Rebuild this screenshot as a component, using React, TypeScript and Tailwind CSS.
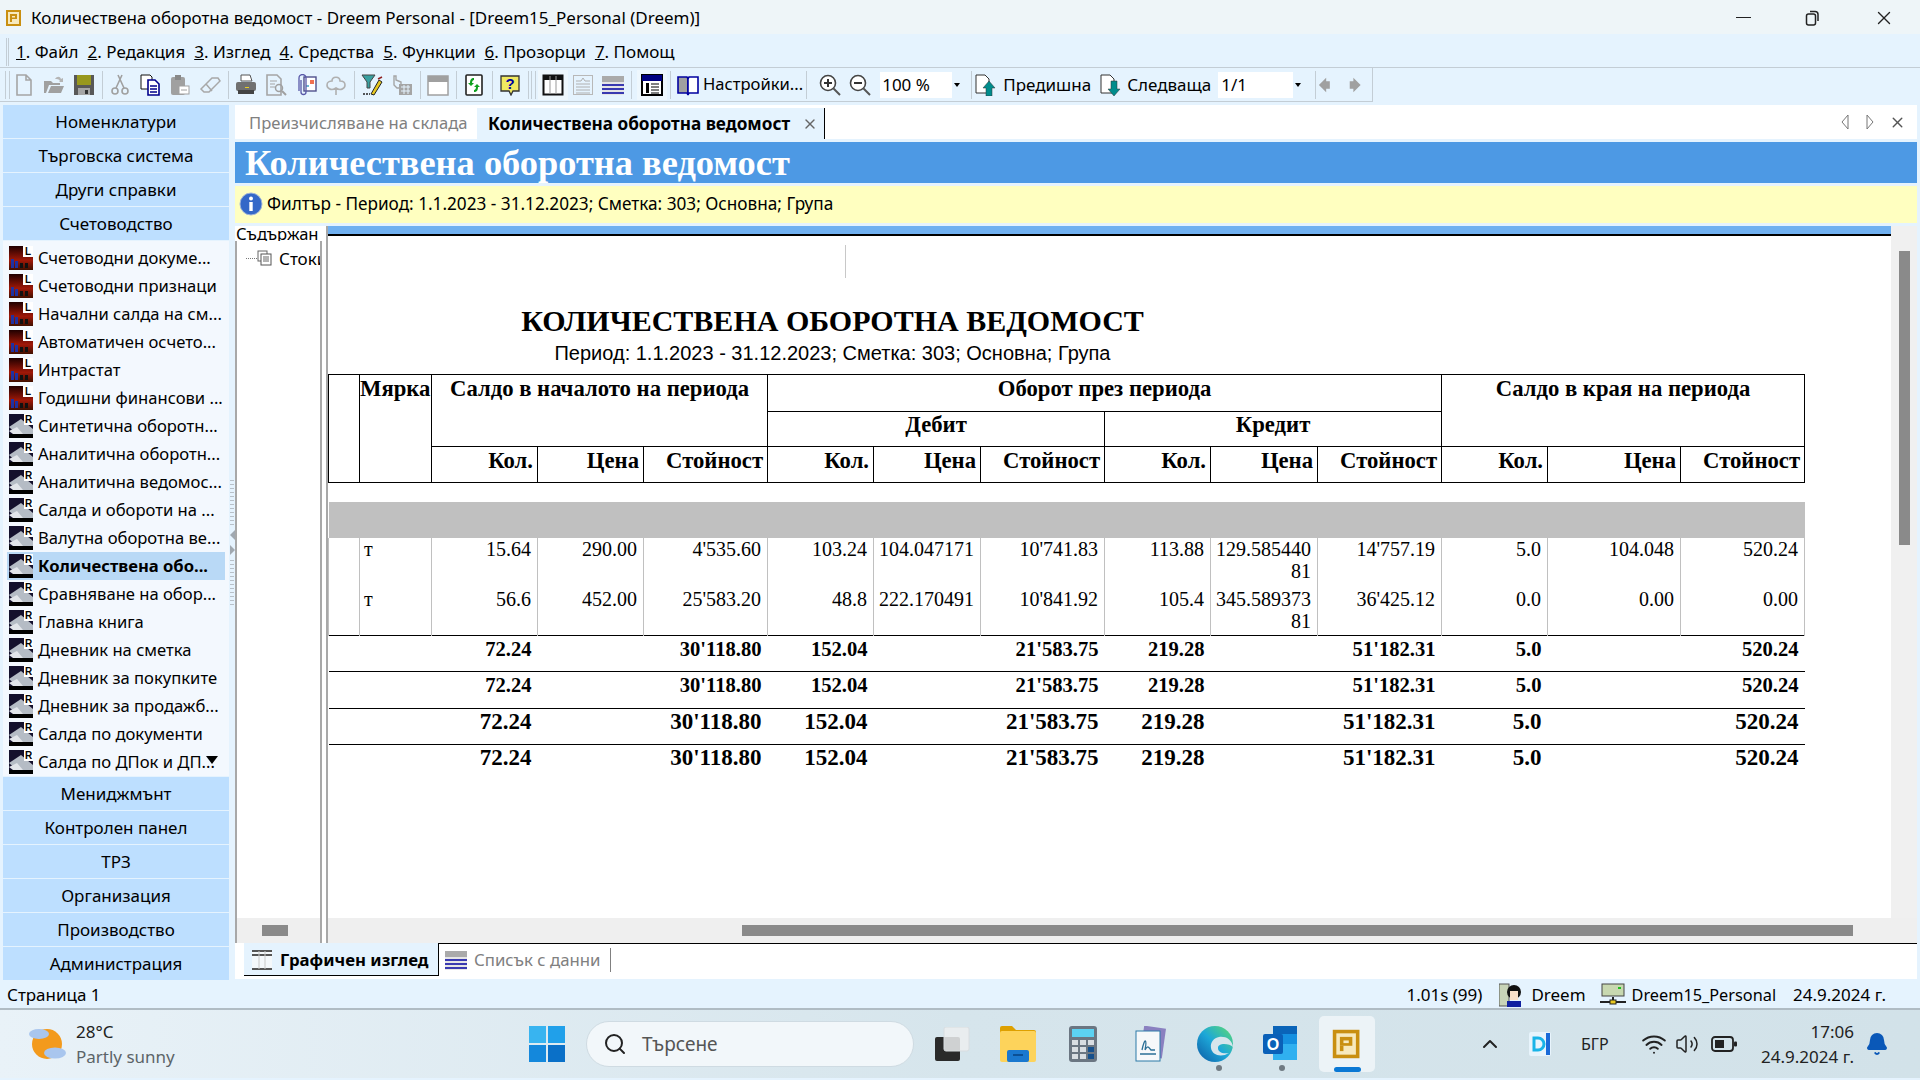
import type { ReactNode } from 'react'
import { X, Search, ChevronUp, Wifi, Volume2, Bell } from 'lucide-react'

const Svg = ({ children, size = 22 }: { children: ReactNode; size?: number }) => (
    <svg width={size} height={size} viewBox="0 0 22 22">{children}</svg>
)

const icons: Record<string, ReactNode> = {
    file: <path d="M4 1h9l5 5v15H4zM13 1v5h5" fill="none" stroke="#a5a5a5" strokeWidth="1.6" />,
    open: <><path d="M1 19V7h7l2 2h7v2H6l-3 8zM5 19l3-7h13l-3 7z" fill="#a0a0a0" /><path d="M12 5c2-3 5-3 6 0l2-1v4h-4l1-1c-1-2-3-2-5-2z" fill="#b5b5b5" /></>,
    save: <><rect x="1" y="1" width="20" height="20" fill="#585858" /><rect x="4" y="1" width="14" height="10" fill="#98981e" /><rect x="5" y="14" width="12" height="7" fill="#a5a5a5" /><rect x="12" y="16" width="3" height="4" fill="#333" /></>,
    cut: <g fill="none" stroke="#a0a0a0" strokeWidth="1.6"><circle cx="6" cy="17" r="3" /><circle cx="16" cy="17" r="3" /><path d="M7 14 13 1M15 14 9 1" /></g>,
    copy: <><path d="M2 1h9l2 2v12H2z" fill="#fff" stroke="#111" /><path d="M9 6h7l4 4v11H9z" fill="#fff" stroke="#00008c" strokeWidth="1.6" /><path d="M11 12h7M11 15h7M11 18h7" stroke="#00008c" strokeWidth="1.5" /></>,
    paste: <><rect x="2" y="3" width="14" height="18" rx="2" fill="#a0a0a0" /><rect x="6" y="1" width="6" height="5" fill="#888" /><rect x="10" y="12" width="10" height="8" fill="#fff" stroke="#a0a0a0" /><path d="M12 16h6" stroke="#a0a0a0" /></>,
    erase: <path d="M2 15 13 4h6l2 3-11 11H5zM7 10l6 7" fill="none" stroke="#a8a8a8" strokeWidth="1.5" />,
    print: <><path d="M6 1h9l2 6H6z" fill="#fff" stroke="#555" /><rect x="1" y="8" width="20" height="9" rx="2" fill="#707070" /><rect x="3" y="16" width="16" height="4" fill="#444" /><rect x="10" y="13" width="4" height="1" fill="#e8d020" /></>,
    preview: <><path d="M2 1h10l4 4v16H2z" fill="none" stroke="#a5a5a5" strokeWidth="1.6" /><path d="M5 7h7M5 10h5M5 13h5" stroke="#a5a5a5" /><circle cx="14" cy="14" r="3.5" fill="none" stroke="#a0a0a0" strokeWidth="1.5" /><path d="m17 17 4 4" stroke="#a0a0a0" strokeWidth="2" /></>,
    attach: <><rect x="9" y="3" width="12" height="14" fill="#fff" stroke="#50508c" strokeWidth="1.4" /><rect x="15" y="6" width="4" height="4" fill="#f07050" /><rect x="11" y="11" width="3" height="2" fill="#70b8d0" /><path d="M6 6v12a2.500 2.500 0 0 0 5 0V4a3 3 0 0 0-7 0v13" fill="none" stroke="#5858a8" strokeWidth="1.3" /></>,
    tree: <path d="M11 21v-7M11 14c-4 3-9 1-9-3 0-3 3-4 5-4 0-5 8-5 8 0 3 0 5 1 5 4 0 4-5 6-9 3z" fill="none" stroke="#b0b0b0" strokeWidth="1.6" />,
    filter: <><path d="M1 1h13l-5 7v6H6V8z" fill="#38a0a0" stroke="#444" /><path d="M10 20 18 6l3 2-8 13z" fill="#e8c820" stroke="#222" /><path d="M2 20h7" stroke="#222" strokeDasharray="2 1" strokeWidth="1.5" /><path d="m17 5 4-2" stroke="#902020" strokeWidth="1.5" /></>,
    hand: <><path d="M3 2v9l3 3h4V8L5 6V2z" fill="none" stroke="#a5a5a5" strokeWidth="1.4" /><rect x="8" y="10" width="13" height="11" fill="#a5a5a5" /><path d="M10 13h9M10 17h9M13 11v9M17 11v9" stroke="#e5f3fe" /></>,
    window: <><rect x="1" y="2" width="20" height="19" fill="#fff" stroke="#a0a0a0" strokeWidth="1.5" /><rect x="1" y="2" width="20" height="6" fill="#a0a0a0" /></>,
    refresh: <><rect x="3" y="1" width="16" height="20" rx="1" fill="#fff" stroke="#222" strokeWidth="1.6" /><path d="M11 4c-3 0-4 2-4 5H5l3 3 3-3H9c0-2 1-3 2-3zM11 18c3 0 4-2 4-5h2l-3-3-3 3h2c0 2-1 3-2 3z" fill="#10a020" /></>,
    help: <><path d="M2 2h18v15h-6l-2 4-2-4H2z" fill="#f0e860" stroke="#333" strokeWidth="1.3" /><text x="11" y="15" textAnchor="middle" fontSize="15" fontWeight="700" fill="#0000a0" fontFamily="Liberation Sans">?</text></>,
    grid: <><rect x="1.500" y="1.500" width="19" height="19" fill="#fff" stroke="#111" strokeWidth="2" /><rect x="1" y="1" width="20" height="5" fill="#111" /><path d="M8 2v18M14 2v18" stroke="#999" /></>,
    gridLite: <><rect x="1" y="1" width="20" height="20" fill="#f4f8fb" /><path d="M1 2h20M1 6h20M1 20h20" stroke="#555" strokeWidth="2" /><path d="M8 2v18M14 2v18" stroke="#c8c8c8" /></>,
    form: <><rect x="1.500" y="1.500" width="19" height="19" fill="none" stroke="#b8b8b8" /><path d="M4 7h5l2-3 2 3h5M4 10h14M4 13h14M4 16h14M4 19h14" stroke="#b0b0b0" fill="none" /></>,
    rows: <><rect x="0" y="2" width="22" height="6" fill="#aaa" /><rect x="0" y="8" width="22" height="13" fill="#e5e5e5" /><path d="M0 11h22M0 15h22M0 19h22" stroke="#0000a0" strokeWidth="1.6" /></>,
    outline: <><rect x="1" y="1" width="20" height="20" fill="#fff" stroke="#000" strokeWidth="2" /><rect x="1" y="1" width="20" height="6" fill="#000080" /><rect x="5" y="9" width="3" height="10" fill="#000" /><path d="M10 10h8M10 13h8M10 16h8M10 19h8" stroke="#000" /></>,
    book: <><path d="M1 3h9l1 2v16l-1-2H1z" fill="#a0a0a0" stroke="#0000a0" strokeWidth="1.6" /><path d="M21 3h-9l-1 2v16l1-2h9z" fill="#fff" stroke="#0000a0" strokeWidth="1.6" /></>,
    zoomin: <><circle cx="9" cy="9" r="7.500" fill="#fff" stroke="#444" strokeWidth="1.6" /><path d="M5 9h8M9 5v8" stroke="#333" strokeWidth="2" /><path d="m14 14 7 7" stroke="#555" strokeWidth="2" /></>,
    zoomout: <><circle cx="9" cy="9" r="7.500" fill="#fff" stroke="#444" strokeWidth="1.6" /><path d="M5 9h8" stroke="#333" strokeWidth="2" /><path d="m14 14 7 7" stroke="#555" strokeWidth="2" /></>,
    pageup: <><path d="M2 1h9l4 4v14H2z" fill="#fff" stroke="#333" /><path d="M15 7l6 7h-3v8h-6v-8H9z" fill="#008c8c" stroke="#333" strokeWidth=".5" /></>,
    pagedown: <><path d="M2 1h9l4 4v14H2z" fill="#fff" stroke="#333" /><path d="M15 22l6-7h-3V7h-6v8H9z" fill="#008c8c" stroke="#333" strokeWidth=".5" /></>,
    back: <path d="M1 11 9 3v4h4v8H9v4z" fill="#a0a0a0" />,
    forward: <path d="M15 11 7 3v4H3v8h4v4z" fill="#a0a0a0" />,
}

function AppIcon({ size = 18 }: { size?: number }) {
    return (
        <svg width={size} height={size} viewBox="0 0 18 18">
            <rect x="1" y="1" width="15" height="16" fill="#c98f10" />
            <rect x="3" y="3" width="11" height="12" fill="#f7e9bd" />
            <rect x="5" y="5" width="7" height="5" fill="#c98f10" />
            <rect x="7" y="7" width="3" height="1.500" fill="#f7e9bd" />
            <rect x="5" y="10" width="2" height="3" fill="#c98f10" />
        </svg>
    )
}

const Tool = ({ name, on }: { name: string; on?: boolean }) => (
    <div className={`flex h-[30px] w-[30px] items-center justify-center ${on ? 'bg-[#eef7fd]' : ''}`}>
        <Svg>{icons[name]}</Svg>
    </div>
)

const Sep = () => <div className="ml-[3px] mr-[2px] h-[28px] w-px bg-[#c3cdd5]" />

const Grip = () => <div className="h-[28px] w-[5px] border-x border-[#c3cdd5]" />

function NavHead({ label }: { label: string }) {
    return <div className="flex h-[33px] shrink-0 items-center justify-center bg-[#bddfff] pt-px text-[17px]">{label}</div>
}

function LIcon() {
    return (
        <svg width="24" height="24" viewBox="0 0 24 24" className="shrink-0">
            <defs>
                <linearGradient id="lg" x1="0" y1="0" x2="0" y2="1">
                    <stop offset="0" stopColor="#200000" />
                    <stop offset="0.6" stopColor="#a01808" />
                    <stop offset="1" stopColor="#401000" />
                </linearGradient>
            </defs>
            <rect width="24" height="24" fill="url(#lg)" />
            <rect x="2" y="13" width="3" height="9" fill="#2030a0" />
            <rect x="6" y="15" width="3" height="7" fill="#2030a0" />
            <rect x="11" y="17" width="3" height="5" fill="#111" />
            <rect x="16" y="17" width="3" height="5" fill="#111" />
            <rect x="14" y="0" width="10" height="11" fill="#fff" />
            <text x="19" y="9" textAnchor="middle" fontSize="10" fontWeight="700" fontFamily="Liberation Sans">L</text>
        </svg>
    )
}

function RIcon() {
    return (
        <svg width="24" height="24" viewBox="0 0 24 24" className="shrink-0">
            <rect width="24" height="24" fill="#14102c" />
            <path d="M0 13 12 5l12 10v5H8z" fill="#b5bcc5" />
            <path d="M0 17 8 13l6 7H4z" fill="#e2e5ea" />
            <rect x="0" y="20" width="24" height="4" fill="#000" />
            <rect x="15" y="0" width="9" height="11" fill="#fff" />
            <text x="19.500" y="9" textAnchor="middle" fontSize="10" fontWeight="700" fontFamily="Liberation Sans">R</text>
        </svg>
    )
}

const accountingRows: [string, 'L' | 'R'][] = [
    ['Счетоводни докуме...', 'L'],
    ['Счетоводни признаци', 'L'],
    ['Начални салда на см...', 'L'],
    ['Автоматичен осчето...', 'L'],
    ['Интрастат', 'L'],
    ['Годишни финансови ...', 'L'],
    ['Синтетична оборотн...', 'R'],
    ['Аналитична оборотн...', 'R'],
    ['Аналитична ведомос...', 'R'],
    ['Салда и обороти на ...', 'R'],
    ['Валутна оборотна ве...', 'R'],
    ['Количествена обо...', 'R'],
    ['Сравняване на обор...', 'R'],
    ['Главна книга', 'R'],
    ['Дневник на сметка', 'R'],
    ['Дневник за покупките', 'R'],
    ['Дневник за продажб...', 'R'],
    ['Салда по документи', 'R'],
    ['Салда по ДПок и ДП...', 'R'],
]

function Sidebar() {
    return (
        <div className="flex w-[226px] shrink-0 flex-col gap-px">
            <NavHead label="Номенклатури" />
            <NavHead label="Търговска система" />
            <NavHead label="Други справки" />
            <NavHead label="Счетоводство" />
            <div className="relative flex h-[535px] shrink-0 flex-col bg-[#f3f8fe] pt-[3px]">
                {accountingRows.map(([label, kind]) => {
                    const selected = label.startsWith('Количествена')
                    return (
                        <div key={label} className={`ml-[4px] mr-[4px] flex h-[28px] shrink-0 items-center gap-[5px] pl-[2px] text-[16.6px] whitespace-nowrap ${selected ? 'bg-[#b9d9f6] font-bold' : ''}`}>
                            {kind === 'L' ? <LIcon /> : <RIcon />}
                            <span className="pt-px">{label}</span>
                        </div>
                    )
                })}
                <div className="absolute bottom-[12px] right-[11px] h-0 w-0 border-x-[6px] border-t-[8px] border-x-transparent border-t-black" />
            </div>
            <NavHead label="Мениджмънт" />
            <NavHead label="Контролен панел" />
            <NavHead label="ТРЗ" />
            <NavHead label="Организация" />
            <NavHead label="Производство" />
            <NavHead label="Администрация" />
        </div>
    )
}

function Splitter() {
    const dashes = Array.from({ length: 12 })
    return (
        <div className="flex w-[6px] shrink-0 flex-col items-center justify-center gap-[3px]">
            {dashes.map((_, i) => <div key={i} className="h-px w-[4px] bg-[#b8c0c8]" />)}
            <div className="my-[2px] h-0 w-0 border-y-[5px] border-r-[5px] border-y-transparent border-r-[#a0a8b0]" />
            <div className="mb-[2px] h-0 w-0 border-y-[5px] border-l-[5px] border-y-transparent border-l-[#a0a8b0]" />
            {dashes.map((_, i) => <div key={i} className="h-px w-[4px] bg-[#b8c0c8]" />)}
        </div>
    )
}

const colWidths = ['w-[31px]', 'w-[72px]', 'w-[106px]', 'w-[106px]', 'w-[124px]', 'w-[106px]', 'w-[107px]', 'w-[124px]', 'w-[106px]', 'w-[107px]', 'w-[124px]', 'w-[106px]', 'w-[133px]', 'w-[124px]']

const dataRows = [
    ['15.64', '290.00', "4'535.60", '103.24', '104.047171', "10'741.83", '113.88', '129.58544081', "14'757.19", '5.0', '104.048', '520.24'],
    ['56.6', '452.00', "25'583.20", '48.8', '222.170491', "10'841.92", '105.4', '345.58937381', "36'425.12", '0.0', '0.00', '0.00'],
]

const totals = ['72.24', '', "30'118.80", '152.04', '', "21'583.75", '219.28', '', "51'182.31", '5.0', '', '520.24']

function TotalRow({ big, height }: { big?: boolean; height: string }) {
    return (
        <tr className={`border-t border-black align-top font-bold ${big ? 'text-[23px]' : 'text-[20.6px]'}`}>
            <td className={height} colSpan={2} />
            {totals.map((v, i) => <td key={i} className="pr-[6px] pt-[2px] text-right leading-[22px]">{v}</td>)}
        </tr>
    )
}

function ReportTable() {
    const th = 'border border-black align-top font-bold'
    return (
        <table className="w-[1476px] table-fixed border-collapse font-['Liberation_Serif',serif] text-[20px] text-black">
            <colgroup>{colWidths.map((w, i) => <col key={i} className={w} />)}</colgroup>
            <thead className="text-[22.7px] leading-[22px]">
                <tr>
                    <th rowSpan={3} className={th} />
                    <th rowSpan={3} className={`${th} pt-[3px] text-left`}>Мярка</th>
                    <th rowSpan={2} colSpan={3} className={`${th} pt-[3px] text-center`}>Салдо в началото на периода</th>
                    <th colSpan={6} className={`${th} h-[37px] pt-[3px] text-center`}>Оборот през периода</th>
                    <th rowSpan={2} colSpan={3} className={`${th} pt-[3px] text-center`}>Салдо в края на периода</th>
                </tr>
                <tr>
                    <th colSpan={3} className={`${th} h-[35px] pt-[2px] text-center`}>Дебит</th>
                    <th colSpan={3} className={`${th} pt-[2px] text-center`}>Кредит</th>
                </tr>
                <tr>
                    {[0, 1, 2, 3].flatMap(g => ['Кол.', 'Цена', 'Стойност'].map(h => (
                        <th key={g + h} className={`${th} h-[36px] pr-[4px] pt-[3px] text-right`}>{h}</th>
                    )))}
                </tr>
            </thead>
            <tbody className="leading-[22px]">
                <tr><td colSpan={14} className="h-[19px]" /></tr>
                <tr><td colSpan={14} className="h-[36px] bg-[#c0c0c0]" /></tr>
                {dataRows.map((row, r) => (
                    <tr key={r} className="align-top">
                        <td className={`border-x border-[#c0c0c0] ${r === 0 ? 'h-[50px]' : 'h-[48px]'}`} />
                        <td className="border-x border-[#c0c0c0] pl-[4px]">т</td>
                        {row.map((v, i) => (
                            <td key={i} className="border-x border-[#c0c0c0] pr-[6px] text-right break-all">{v}</td>
                        ))}
                    </tr>
                ))}
                <TotalRow height="h-[36px]" />
                <TotalRow height="h-[37px]" />
                <TotalRow big height="h-[36px]" />
                <TotalRow big height="h-[36px]" />
            </tbody>
        </table>
    )
}

function WeatherIcon() {
    return (
        <svg width="38" height="36" viewBox="0 0 38 36">
            <circle cx="19" cy="18" r="15" fill="#f39a1c" />
            <ellipse cx="11" cy="8" rx="10" ry="5" fill="#a9c6ee" />
            <ellipse cx="27" cy="27" rx="11" ry="5.500" fill="#a9c6ee" />
        </svg>
    )
}

function Taskbar() {
    return (
        <div className="flex h-[70px] shrink-0 items-center border-t-2 border-[#b0bcc4] bg-gradient-to-r from-[#e9f2f8] via-[#d6e5ec] to-[#d2e2e9]">
            <div className="ml-[28px] flex w-[500px] shrink-0 items-center gap-[10px]">
                <WeatherIcon />
                <div className="text-[17px] leading-[25px]">
                    <div className="text-[#222]">28°C</div>
                    <div className="text-[#5c6468]">Partly sunny</div>
                </div>
            </div>
            <svg width="36" height="36" viewBox="0 0 36 36" className="ml-[1px] shrink-0">
                <rect width="17" height="17" fill="#38b4f0" /><rect x="19" width="17" height="17" fill="#20a0ea" />
                <rect y="19" width="17" height="17" fill="#1488dc" /><rect x="19" y="19" width="17" height="17" fill="#0a70c8" />
            </svg>
            <div className="ml-[21px] flex h-[46px] w-[328px] shrink-0 items-center rounded-full border border-[#cfdbe2] bg-[#f2f7fa] pl-[16px] text-[19px] text-[#555]">
                <Search size={24} color="#222" strokeWidth={2} />
                <span className="ml-[15px]">Търсене</span>
            </div>
            <svg width="36" height="34" viewBox="0 0 36 34" className="ml-[20px] shrink-0">
                <rect x="1" y="10" width="25" height="24" rx="2" fill="#2a2a2a" />
                <rect x="10" y="0" width="25" height="24" rx="2" fill="#eceff0" fillOpacity=".85" stroke="#d8dde0" />
            </svg>
            <svg width="36" height="36" viewBox="0 0 36 36" className="ml-[30px] shrink-0">
                <path d="M0 2a2 2 0 0 1 2-2h10l4 4h18a2 2 0 0 1 2 2v8H0z" fill="#dea000" />
                <rect y="5" width="36" height="31" rx="2" fill="#fdd35b" />
                <rect x="7" y="24" width="22" height="12" rx="2" fill="#1a78cf" />
                <rect x="13" y="28" width="10" height="2" fill="#0b4f94" />
            </svg>
            <svg width="28" height="36" viewBox="0 0 28 36" className="ml-[33px] shrink-0">
                <rect width="28" height="36" rx="3" fill="#6b7682" />
                <rect x="3" y="3" width="22" height="8" fill="#5cd2f2" />
                {[0, 1, 2].flatMap(r => [0, 1, 2].map(c => (
                    <rect key={`${r}${c}`} x={3 + c * 8} y={14 + r * 7} width="6" height="5" fill={c === 2 && r > 0 ? '#16508c' : '#d8dde2'} />
                )))}
            </svg>
            <svg width="32" height="36" viewBox="0 0 32 36" className="ml-[37px] shrink-0">
                <rect x="8" y="1" width="22" height="30" fill="#8a80c0" transform="rotate(8 19 16)" />
                <rect x="2" y="5" width="24" height="30" fill="#f6f8fa" stroke="#2c7aa8" />
                <path d="M8 24c3-14 5-10 3 0 3-6 4-2 6 0h4M6 28h16" fill="none" stroke="#2b6f96" strokeWidth="1.300" />
            </svg>
            <svg width="36" height="36" viewBox="0 0 36 36" className="ml-[31px] shrink-0">
                <defs>
                    <linearGradient id="eg" x1="1" y1="0" x2="0" y2="1">
                        <stop offset="0" stopColor="#5fdc6e" />
                        <stop offset="0.5" stopColor="#1da8d8" />
                        <stop offset="1" stopColor="#0c59a4" />
                    </linearGradient>
                </defs>
                <circle cx="18" cy="18" r="18" fill="url(#eg)" />
                <path d="M36 21c-1-8-8-11-14-10-5 1-9 5-8 11 1 7 10 10 18 5-7 1-11-1-11-5 0-3 3-4 6-4 4 0 7 1 9 3z" fill="#d6e5ec" />
            </svg>
            <svg width="36" height="36" viewBox="0 0 36 36" className="ml-[30px] shrink-0">
                <rect x="10" y="0" width="24" height="34" rx="2" fill="#1590e0" />
                <rect x="10" y="0" width="24" height="8" fill="#0a64b8" />
                <path d="M10 18l24 0v16H10z" fill="#30b0f0" />
                <rect x="0" y="8" width="20" height="20" rx="2" fill="#0a60b8" />
                <text x="10" y="24" textAnchor="middle" fontSize="16" fontWeight="700" fill="#fff" fontFamily="Liberation Sans">O</text>
            </svg>
            <div className="relative ml-[20px] flex h-[56px] w-[56px] shrink-0 items-center justify-center rounded-[5px] bg-[#ecf3f7]">
                <AppIcon size={32} />
                <div className="absolute bottom-0 left-[15px] h-[5px] w-[27px] rounded-full bg-[#0a78d4]" />
                <div className="absolute bottom-[1px] left-[-103px] h-[6px] w-[6px] rounded-full bg-[#707a82]" />
                <div className="absolute bottom-[1px] left-[-40px] h-[6px] w-[6px] rounded-full bg-[#707a82]" />
            </div>
            <ChevronUp size={24} strokeWidth={2} color="#222" className="ml-[103px] shrink-0" />
            <svg width="22" height="24" viewBox="0 0 22 24" className="ml-[27px] shrink-0">
                <rect width="22" height="24" rx="2" fill="#e8f4fc" />
                <rect x="17" y="1" width="4" height="22" fill="#1a6ad8" />
                <path d="M5 6h4a6 6 0 0 1 0 12H5z" fill="none" stroke="#18b4e8" strokeWidth="3" />
            </svg>
            <span className="ml-[30px] w-[30px] shrink-0 text-[16px] text-[#222]">БГР</span>
            <Wifi size={26} strokeWidth={1.800} color="#222" className="ml-[30px] shrink-0" />
            <Volume2 size={24} strokeWidth={1.500} color="#222" className="ml-[8px] shrink-0" />
            <svg width="26" height="16" viewBox="0 0 26 16" className="ml-[12px] shrink-0">
                <rect x="1" y="1" width="21" height="14" rx="3" fill="none" stroke="#222" strokeWidth="1.800" />
                <rect x="4" y="4" width="9" height="8" fill="#222" />
                <rect x="23" y="5.500" width="3" height="5" rx="1" fill="#222" />
            </svg>
            <div className="ml-[15px] w-[102px] shrink-0 text-right text-[17px] leading-[25px] text-[#222]">
                <div>17:06</div>
                <div className="whitespace-nowrap">24.9.2024 г.</div>
            </div>
            <Bell size={24} fill="#0a58b8" color="#0a58b8" className="ml-[11px] shrink-0" />
        </div>
    )
}

export default function App() {
    return (
        <div className="flex h-[1080px] w-[1920px] flex-col overflow-hidden bg-[#e5f3fe] font-['Noto_Sans','Open_Sans',sans-serif] text-black">
            {/* title bar */}
            <div className="flex h-[34px] shrink-0 items-center bg-[#eef5f8] pt-px text-[17px]">
                <div className="ml-[5px] mr-[8px] flex"><AppIcon /></div>
                <span className="whitespace-nowrap">Количествена оборотна ведомост - Dreem Personal - [Dreem15_Personal (Dreem)]</span>
                <div className="ml-auto flex h-full items-center">
                    <div className="h-px w-[15px] bg-[#222]" />
                    <svg width="16" height="16" viewBox="0 0 16 16" className="ml-[54px]">
                        <rect x="1.500" y="4" width="9" height="11" rx="2" fill="none" stroke="#222" strokeWidth="1.500" />
                        <path d="M5 1.500h5a3 3 0 0 1 3 3V11" fill="none" stroke="#222" strokeWidth="1.500" />
                    </svg>
                    <X size={22} strokeWidth={1.500} color="#222" className="ml-[52px] mr-[25px]" />
                </div>
            </div>

            {/* menu */}
            <div className="flex h-[34px] shrink-0 items-center border-b border-[#c3cdd5] pt-[3px] text-[17px]">
                <div className="ml-[6px] mr-[7px] h-[28px] w-[3px] border-x border-[#c3cdd5]" />
                <div className="flex gap-[9px]">
                    {['Файл', 'Редакция', 'Изглед', 'Средства', 'Функции', 'Прозорци', 'Помощ'].map((m, i) => (
                        <span key={m} className="whitespace-nowrap"><u>{i + 1}</u>. {m}</span>
                    ))}
                </div>
            </div>

            {/* toolbar */}
            <div className="flex h-[34px] w-[1373px] shrink-0 items-center border-b border-r border-[#c3cdd5] pl-[5px] text-[17px]">
                <div className="mr-[2px] w-[2px]"><Grip /></div>
                <Tool name="file" /><Tool name="open" /><Tool name="save" /><Sep />
                <Tool name="cut" /><Tool name="copy" /><Tool name="paste" /><Tool name="erase" /><Sep />
                <Tool name="print" /><Tool name="preview" /><Tool name="attach" /><Tool name="tree" /><Sep />
                <Tool name="filter" /><Tool name="hand" /><Sep />
                <Tool name="window" /><Sep />
                <Tool name="refresh" /><Sep />
                <Tool name="help" /><Sep />
                <div className="mr-[2px]"><Grip /></div>
                <Tool name="grid" on /><Tool name="form" /><Tool name="rows" /><Sep />
                <div className="ml-[3px]"><Tool name="outline" on /></div>
                <Sep />
                <Tool name="book" />
                <span className="whitespace-nowrap text-[16.6px]">Настройки...</span>
                <Sep />
                <div className="ml-[6px]"><Tool name="zoomin" /></div>
                <Tool name="zoomout" />
                <div className="ml-[5px] flex h-[26px] w-[72px] items-center bg-white pl-[2px] text-[17px]">100 %</div>
                <div className="ml-[2px] h-0 w-0 border-x-[3px] border-t-[4px] border-x-transparent border-t-black" />
                <div className="ml-[8px]"><Sep /></div>
                <div className="flex items-center gap-[7px]"><Svg><g>{icons.pageup}</g></Svg><span>Предишна</span></div>
                <div className="ml-[8px] flex items-center gap-[6px]"><Svg><g>{icons.pagedown}</g></Svg><span>Следваща</span></div>
                <div className="ml-[7px] flex h-[26px] w-[75px] items-center bg-white pl-[3px]">1/1</div>
                <div className="ml-[2px] h-0 w-0 border-x-[3px] border-t-[4px] border-x-transparent border-t-black" />
                <div className="ml-[11px]"><Sep /></div>
                <Svg size={20}>{icons.back}</Svg>
                <div className="ml-[9px]"><Svg size={20}>{icons.forward}</Svg></div>
            </div>

            {/* body */}
            <div className="mt-[3px] flex h-[874px] shrink-0 pl-[3px] pr-[3px]">
                <Sidebar />
                <Splitter />
                <div className="flex w-[1682px] shrink-0 flex-col">
                    {/* document tabs */}
                    <div className="flex h-[34px] shrink-0 items-stretch bg-white">
                        <div className="flex w-[242px] items-center pl-[14px] pt-[2px] text-[16.6px] whitespace-nowrap text-[#808080]">Преизчисляване на склада</div>
                        <div className="mt-[3px] flex w-[348px] items-center border-r border-black bg-[#e5f3fe] pl-[11px] text-[17.2px] font-bold whitespace-nowrap">
                            Количествена оборотна ведомост
                            <X size={16} color="#666" className="ml-[12px]" />
                        </div>
                        <div className="ml-auto flex items-center pr-[11px]">
                            <svg width="8" height="16" viewBox="0 0 8 16"><path d="M7 1 1 8l6 7z" fill="#fff" stroke="#777" /></svg>
                            <svg width="8" height="16" viewBox="0 0 8 16" className="ml-[17px]"><path d="M1 1l6 7-6 7z" fill="#fff" stroke="#777" /></svg>
                            <X size={17} color="#555" className="ml-[15px]" />
                        </div>
                    </div>

                    <div className="mt-[3px] flex h-[41px] shrink-0 items-center bg-[#4d99e4] pl-[10px] pt-[2px] font-['Liberation_Serif',serif] text-[36.4px] font-bold whitespace-nowrap text-white">Количествена оборотна ведомост</div>

                    <div className="mt-[3px] flex h-[37px] shrink-0 items-center bg-[#ffffc0] pb-[2px] pl-[4px] text-[17.2px] whitespace-nowrap">
                        <svg width="24" height="24" viewBox="0 0 24 24" className="mr-[4px]">
                            <circle cx="12" cy="12" r="11" fill="#3468c8" stroke="#a0b4d8" />
                            <circle cx="12" cy="6.500" r="2" fill="#fff" />
                            <rect x="10.300" y="10" width="3.400" height="9" fill="#fff" />
                        </svg>
                        Филтър - Период: 1.1.2023 - 31.12.2023; Сметка: 303; Основна; Група
                    </div>

                    {/* split panes */}
                    <div className="mt-[3px] flex h-[717px] shrink-0">
                        <div className="flex w-[91px] shrink-0 flex-col bg-white">
                            <div className="h-[15px] shrink-0 overflow-hidden pl-[1px] text-[16.6px] leading-[15px]">Съдържан</div>
                            <div className="flex w-[87px] flex-1 flex-col border-x-2 border-[#a8a8a8]">
                                <div className="flex h-[677px] items-start overflow-hidden pl-[9px] pt-[8px] text-[17px] leading-[20px] whitespace-nowrap">
                                    <div className="mt-[9px] w-[11px] shrink-0 border-t border-dotted border-[#777]" />
                                    <svg width="16" height="16" viewBox="0 0 16 16" className="mr-[6px] mt-px shrink-0">
                                        <rect x="1" y="1" width="9" height="10" fill="#fff" stroke="#666" />
                                        <rect x="4" y="4" width="10" height="11" fill="#fff" stroke="#555" />
                                        <path d="M6 7h6M6 9h6M6 11h6" stroke="#666" />
                                    </svg>
                                    Стоки
                                </div>
                                <div className="flex h-[25px] shrink-0 items-center bg-[#efefef] pl-[25px]">
                                    <div className="h-[11px] w-[26px] bg-[#8a8a8a]" />
                                </div>
                            </div>
                        </div>
                        <div className="flex w-[1591px] shrink-0 flex-col border-l-2 border-[#a8a8a8]">
                            <div className="flex h-[692px] shrink-0">
                                <div className="w-[1563px] shrink-0 overflow-hidden bg-white">
                                    <div className="h-[8px] bg-[#70b0f0]" />
                                    <div className="h-[2px] bg-black" />
                                    <div className="ml-[517px] mt-[9px] h-[33px] w-px bg-[#c8c8c8]" />
                                    <div className="mt-[25px] w-[1009px] text-center font-['Liberation_Serif',serif] text-[30px] leading-[36px] font-bold whitespace-nowrap">КОЛИЧЕСТВЕНА ОБОРОТНА ВЕДОМОСТ</div>
                                    <div className="mt-[2px] w-[1009px] text-center font-['Liberation_Sans',sans-serif] text-[20px] leading-[24px] whitespace-nowrap">Период: 1.1.2023 - 31.12.2023; Сметка: 303; Основна; Група</div>
                                    <div className="mt-[9px]"><ReportTable /></div>
                                </div>
                                <div className="flex-1 bg-[#f0f0f0] pl-[8px] pt-[25px]">
                                    <div className="h-[294px] w-[11px] bg-[#8a8a8a]" />
                                </div>
                            </div>
                            <div className="flex h-[25px] shrink-0 items-center bg-[#efefef] pl-[414px]">
                                <div className="h-[11px] w-[1111px] bg-[#8a8a8a]" />
                            </div>
                        </div>
                    </div>

                    {/* view tabs */}
                    <div className="flex h-[36px] shrink-0 items-stretch bg-white">
                        <div className="ml-[9px] flex h-[33px] w-[195px] items-center border-b border-r border-black bg-[#e5f3fe] pl-[7px] pt-[2px] text-[16.8px] font-bold whitespace-nowrap">
                            <Svg>{icons.gridLite}</Svg>
                            <span className="ml-[7px]">Графичен изглед</span>
                        </div>
                        <div className="flex flex-1 items-start border-t border-black">
                            <div className="ml-[6px] mt-[4px] flex h-[24px] items-center border-r border-[#808080] pr-[9px] text-[16.8px] whitespace-nowrap text-[#808080]">
                                <Svg>{icons.rows}</Svg>
                                <span className="ml-[7px]">Списък с данни</span>
                            </div>
                        </div>
                    </div>
                </div>
            </div>

            {/* status bar */}
            <div className="flex h-[29px] shrink-0 items-center px-[7px] pt-[3px] text-[17px]">
                <span>Страница 1</span>
                <div className="ml-auto flex items-center pr-[27px]">
                    <span>1.01s (99)</span>
                    <svg width="24" height="26" viewBox="0 0 24 26" className="ml-[17px]">
                        <rect x="0" y="2" width="10" height="22" fill="#c8d4b8" stroke="#555" />
                        <circle cx="15" cy="10" r="7" fill="#111" />
                        <rect x="11" y="9" width="8" height="9" fill="#f8e0c8" />
                        <rect x="8" y="19" width="14" height="6" fill="#1020a0" />
                    </svg>
                    <span className="ml-[8px]">Dreem</span>
                    <svg width="26" height="24" viewBox="0 0 26 24" className="ml-[14px]">
                        <rect x="2" y="1" width="22" height="12" fill="#c8d8b0" stroke="#444" />
                        <rect x="18" y="4" width="3" height="2" fill="#20c020" />
                        <path d="M13 14v4M0 19h26" stroke="#222" strokeWidth="2" />
                        <rect x="10" y="17" width="6" height="4" fill="#e8c820" stroke="#222" />
                    </svg>
                    <span className="ml-[6px] text-[16.300px]">Dreem15_Personal</span>
                    <span className="ml-[17px]">24.9.2024 г.</span>
                </div>
            </div>

            <Taskbar />
        </div>
    )
}
